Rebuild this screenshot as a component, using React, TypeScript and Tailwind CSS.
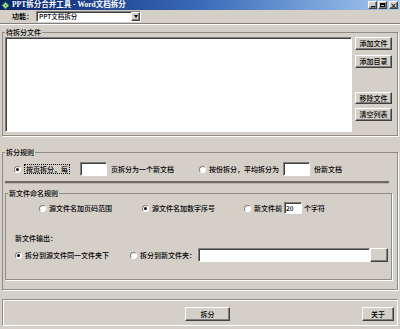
import React from "react";

const raised =
  "border border-t-white border-l-white border-r-[#404040] border-b-[#404040] shadow-[inset_-1px_-1px_0_#808080] bg-[#d4d0c8] shrink-0";
const sunken =
  "border border-t-[#808080] border-l-[#808080] border-r-white border-b-white shadow-[inset_1px_1px_0_#404040] bg-white shrink-0";

const Radio = ({ checked = false }: { checked?: boolean }) => (
  <div className="w-[7px] h-[7px] rounded-full border border-t-[#808080] border-l-[#808080] border-r-white border-b-white bg-white flex items-center justify-center shrink-0">
    {checked && <div className="w-[3px] h-[3px] rounded-full bg-black" />}
  </div>
);

const Btn = ({ label, className = "" }: { label: string; className?: string }) => (
  <div className={`${raised} flex items-center justify-center text-black ${className}`}>{label}</div>
);

const Legend = ({ children }: { children: React.ReactNode }) => (
  <legend className="ml-[2px] px-[1px] h-[9px] leading-[9px] text-black">{children}</legend>
);

export default function App() {
  return (
    <div
      className="w-[400px] h-[329px] bg-[#d4d0c8] flex flex-col overflow-hidden text-[7px] leading-[9px] font-medium text-black whitespace-nowrap"
      style={{ fontFamily: '"Noto Sans CJK SC", "Liberation Sans", sans-serif' }}
    >
      {/* title bar */}
      <div className="h-[10px] shrink-0 flex items-center bg-gradient-to-r from-[#0a246a] via-[#3a6ab8] to-[#a6caf0] pl-[1px] pr-[2px]">
        <svg width="9" height="9" viewBox="0 0 9 9" className="shrink-0">
          <path d="M4.5 0.5 L8.5 4.5 L4.5 8.5 L0.5 4.5 Z" fill="#3c9a3c" />
          <path d="M4.5 2 L7 4.5 L4.5 7 L2 4.5 Z" fill="#e8f4e0" />
          <circle cx="4.5" cy="4.5" r="1" fill="#2c7a2c" />
        </svg>
        <span
          className="ml-[2px] text-white font-bold text-[7.5px] leading-[10px]"
          style={{ fontFamily: '"Liberation Serif", "Noto Sans CJK SC", serif' }}
        >
          PPT拆分合并工具 - Word文档拆分
        </span>
        <div className="ml-auto flex gap-[1px]">
          <div className={`${raised} w-[9px] h-[8px] flex items-end justify-center pb-[1px]`}>
            <div className="w-[4px] h-[1px] bg-black" />
          </div>
          <div className={`${raised} w-[9px] h-[8px] flex items-center justify-center`}>
            <div className="w-[5px] h-[4px] border border-black border-t-2" />
          </div>
          <div className={`${raised} w-[9px] h-[8px] ml-[1px] flex items-center justify-center text-[7px] leading-none font-bold`}>
            ×
          </div>
        </div>
      </div>

      {/* function row */}
      <div className="h-[12px] shrink-0 flex items-center">
        <span className="ml-[12px] w-[24px] font-bold">功能：</span>
        <div className={`${sunken} w-[105px] h-[11px] flex items-center`}>
          <span className="ml-[2px] flex-1 text-[6.5px]">PPT文档拆分</span>
          <div className={`${raised} w-[9px] h-[9px] flex items-center justify-center`}>
            <div className="w-0 h-0 border-l-[2.5px] border-r-[2.5px] border-t-[3px] border-l-transparent border-r-transparent border-t-black" />
          </div>
        </div>
      </div>

      {/* separator */}
      <div className="mt-[1px] shrink-0 border-t border-t-[#808080] border-b border-b-white" />

      {/* files group */}
      <fieldset className="mt-[3px] mx-[2px] h-[108px] shrink-0 border border-[#8f8c85] shadow-[1px_1px_0_#fff]">
        <Legend>待拆分文件</Legend>
        <div className="flex">
          <div className={`${sunken} ml-[2px] w-[347px] h-[95px]`} />
          <div className="ml-[3px] w-[37px] flex flex-col">
            <Btn label="添加文件" className="h-[13px]" />
            <Btn label="添加目录" className="h-[13px] mt-[5px]" />
            <Btn label="移除文件" className="h-[12px] mt-[24px]" />
            <Btn label="清空列表" className="h-[13px] mt-[4px]" />
          </div>
        </div>
      </fieldset>

      {/* split rule group */}
      <fieldset className="mt-[12px] mx-[2px] h-[142px] shrink-0 border border-[#8f8c85] shadow-[1px_1px_0_#fff] flex flex-col">
        <Legend>拆分规则</Legend>
        <div className="mt-[5px] h-[14px] flex items-center">
          <div className="ml-[11px]">
            <Radio checked />
          </div>
          <span className="ml-[3px] px-[1px] border border-dotted border-black leading-[8px]">按页拆分，每</span>
          <div className={`${sunken} ml-[10px] w-[27px] h-[14px]`} />
          <span className="ml-[4px]">页拆分为一个新文档</span>
          <div className="ml-[25px]">
            <Radio />
          </div>
          <span className="ml-[3px]">按份拆分，平均拆分为</span>
          <div className={`${sunken} ml-[4px] w-[27px] h-[14px]`} />
          <span className="ml-[4px]">份新文档</span>
        </div>
        <div className="mt-[5px] ml-[2px] w-[384px] h-[3px] bg-[#6f6c67] border-b border-b-[#b8b5ae]" />

        <fieldset className="mt-[5px] ml-[2px] w-[387px] h-[91px] border border-[#8f8c85] shadow-[1px_1px_0_#fff]">
          <Legend>新文件命名规则</Legend>
          <div className="mt-[4px] h-[12px] flex items-center">
            <div className="ml-[33px]">
              <Radio />
            </div>
            <span className="ml-[3px]">源文件名加页码范围</span>
            <div className="ml-[30px]">
              <Radio checked />
            </div>
            <span className="ml-[3px]">源文件名加数字序号</span>
            <div className="ml-[29px]">
              <Radio />
            </div>
            <span className="ml-[3px]">新文件前</span>
            <div className={`${sunken} ml-[2px] w-[18px] h-[12px] text-[6.5px] leading-[10px] pl-[1px]`}>20</div>
            <span className="ml-[2px]">个字符</span>
          </div>
          <div className="mt-[19px] h-[10px] flex items-center">
            <span className="ml-[9px]">新文件输出：</span>
          </div>
          <div className="mt-[5px] h-[14px] flex items-center">
            <div className="ml-[9px]">
              <Radio checked />
            </div>
            <span className="ml-[3px]">拆分到源文件同一文件夹下</span>
            <div className="ml-[21px]">
              <Radio />
            </div>
            <span className="ml-[3px]">拆分到新文件夹：</span>
            <div className={`${sunken} ml-[2px] flex-1 h-[14px]`} />
            <Btn label="" className="w-[18px] h-[14px] mr-[3px]" />
          </div>
        </fieldset>
      </fieldset>

      {/* bottom panel */}
      <div className="mt-[9px] mx-[2px] h-[27px] shrink-0 border border-t-[#8f8c85] border-l-[#8f8c85] border-r-white border-b-white shadow-[inset_1px_1px_0_#fff] flex items-start">
        <Btn label="拆分" className="mt-[7px] ml-[182px] w-[45px] h-[14px]" />
        <Btn label="关于" className="mt-[7px] ml-auto mr-[3px] w-[32px] h-[14px]" />
      </div>
    </div>
  );
}
